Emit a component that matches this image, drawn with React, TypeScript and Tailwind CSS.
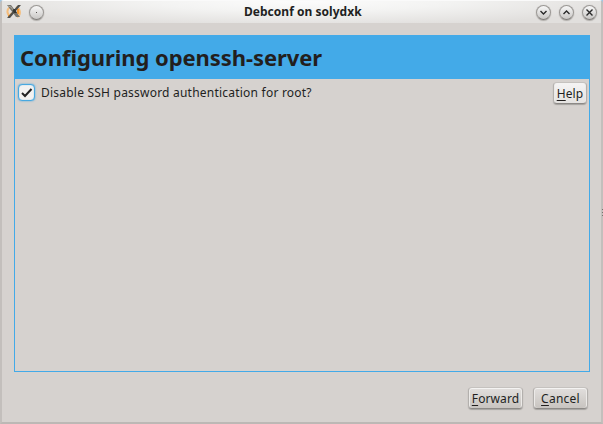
import type { ReactNode } from 'react';

function WindowButton({ children }: { children: ReactNode }) {
  return (
    <span className="flex size-[15px] items-center justify-center rounded-full border border-[#9b9895] border-b-[#7f7c79] bg-linear-to-b from-[#f8f8f8] to-[#c9c7c5] shadow-[0_1px_1px_#b0adaa,0_0_1px_#b5b2af]">
      <svg className="size-[13px] shrink-0" viewBox="0 0 13 13" fill="none" stroke="#292929" strokeWidth="1.4">
        {children}
      </svg>
    </span>
  );
}

function Button({ accessKey, label, className }: { accessKey: string; label: string; className: string }) {
  return (
    <button
      className={`flex items-center justify-center rounded-[4px] border border-t-[#c5c2bf] border-x-[#b3b0ad] border-b-[#8c8986] shadow-[0_1px_1px_#a5a29f,inset_0_1px_0_#f4f3f2,inset_1px_0_0_#eceae8,inset_-1px_0_0_#eceae8] ${className}`}
    >
      <span className="pt-px">
        <span className="underline decoration-1 underline-offset-2">{accessKey}</span>
        {label}
      </span>
    </button>
  );
}

export default function App() {
  return (
    <div className="h-[424px] w-[603px] overflow-hidden bg-[#9fc5e2] font-['Noto_Sans',sans-serif] text-[12px] leading-4 text-[#221f1e]">
      <div className="flex h-full flex-col rounded-t-[4px] border-t border-r-2 border-b-2 border-l-2 border-t-[#fafafa] border-r-[#c3bfbc] border-b-[#bcb8b5] border-l-[#c3bfbc] bg-[#d6d2cf]">
        <header className="flex h-[22px] shrink-0 items-center bg-[radial-gradient(ellipse_at_50%_0%,#fcfcfc_0%,#f3f3f2_35%,#e1dfdd_80%)] pr-[4px] pl-[4px]">
          <svg className="h-[16px] w-[16px] shrink-0" viewBox="0 0 16 16" fill="none">
            <path d="M4 3C0 6 1 11 5 12M10 3c5 2 5 8 1 10" stroke="#f5bd7c" strokeWidth="2" />
            <path d="M2 12l2 0 2-3M12 5v5" stroke="#f79a32" strokeWidth="2" />
            <path d="M1 1h4l9 12h-4z" fill="#77756e" />
            <path d="M12 1h3L4 14H1z" fill="#50504d" />
            <path d="M6 5h3l2 4H8z" fill="#353633" />
            <path d="M2 2l3 1 2 3" stroke="#aaa69c" />
          </svg>
          <span className="ml-[7px] flex size-[15px] items-center justify-center rounded-full border border-[#9b9895] border-b-[#7f7c79] bg-linear-to-b from-[#f8f8f8] to-[#c9c7c5] shadow-[0_1px_1px_#b0adaa,0_0_1px_#b5b2af]">
            <span className="size-px bg-[#55524f]" />
          </span>
          <h1 className="ml-[200px] w-[120px] text-[12px] font-bold tracking-[0.03px] whitespace-nowrap">Debconf on solydxk</h1>
          <div className="ml-auto flex gap-[8px]">
            <WindowButton><path d="M3.5 5l3 3 3-3" /></WindowButton>
            <WindowButton><path d="M3.5 8l3-3 3 3" /></WindowButton>
            <WindowButton><path d="M3.5 3.5l6 6m0-6l-6 6" /></WindowButton>
          </div>
        </header>

        <main className="mt-[12px] ml-[12px] flex h-[337px] w-[576px] shrink-0 flex-col border border-[#43aae8]">
          <h2 className="flex h-[43px] shrink-0 items-center bg-[#43aae8] pb-px pl-[5px] text-[22px] font-bold tracking-[-0.07px] whitespace-nowrap">
            Configuring openssh-server
          </h2>
          <div className="flex items-start pt-[3px] pr-[2px] pl-[3px]">
            <label className="mt-[2px] flex items-center gap-[6px]">
              <span className="flex size-[17px] items-center justify-center rounded-[4px] border border-[#48a8e0] bg-[#f3f2f1] shadow-[0_0_2px_#48a8e0,inset_0_0_1px_#48a8e0]">
                <svg className="size-[13px] shrink-0" viewBox="0 0 13 13" fill="none" stroke="#222" strokeWidth="2">
                  <path d="M2 7l3 3L11.5 3" />
                </svg>
              </span>
              <span className="tracking-[0.22px] whitespace-nowrap">Disable SSH password authentication for root?</span>
            </label>
            <Button accessKey="H" label="elp" className="ml-auto h-[22px] w-[34px] bg-linear-to-b from-[#f5f4f4] to-[#e5e3e1] tracking-[0.1px]" />
          </div>
        </main>

        <div className="mt-[15px] flex justify-end gap-[10px] pr-[13px]">
          <Button accessKey="F" label="orward" className="h-[22px] w-[55px] bg-linear-to-b from-[#e2dfdd] to-[#c8c4c0] tracking-[0.1px]" />
          <Button accessKey="C" label="ancel" className="h-[22px] w-[55px] bg-linear-to-b from-[#e2dfdd] to-[#c8c4c0] tracking-[0.25px]" />
        </div>
      </div>
      <div className="absolute top-[209px] left-[602px] flex flex-col gap-[2px]">
        <span className="size-px bg-[#77736f]" />
        <span className="size-px bg-[#77736f]" />
        <span className="size-px bg-[#77736f]" />
      </div>
    </div>
  );
}
